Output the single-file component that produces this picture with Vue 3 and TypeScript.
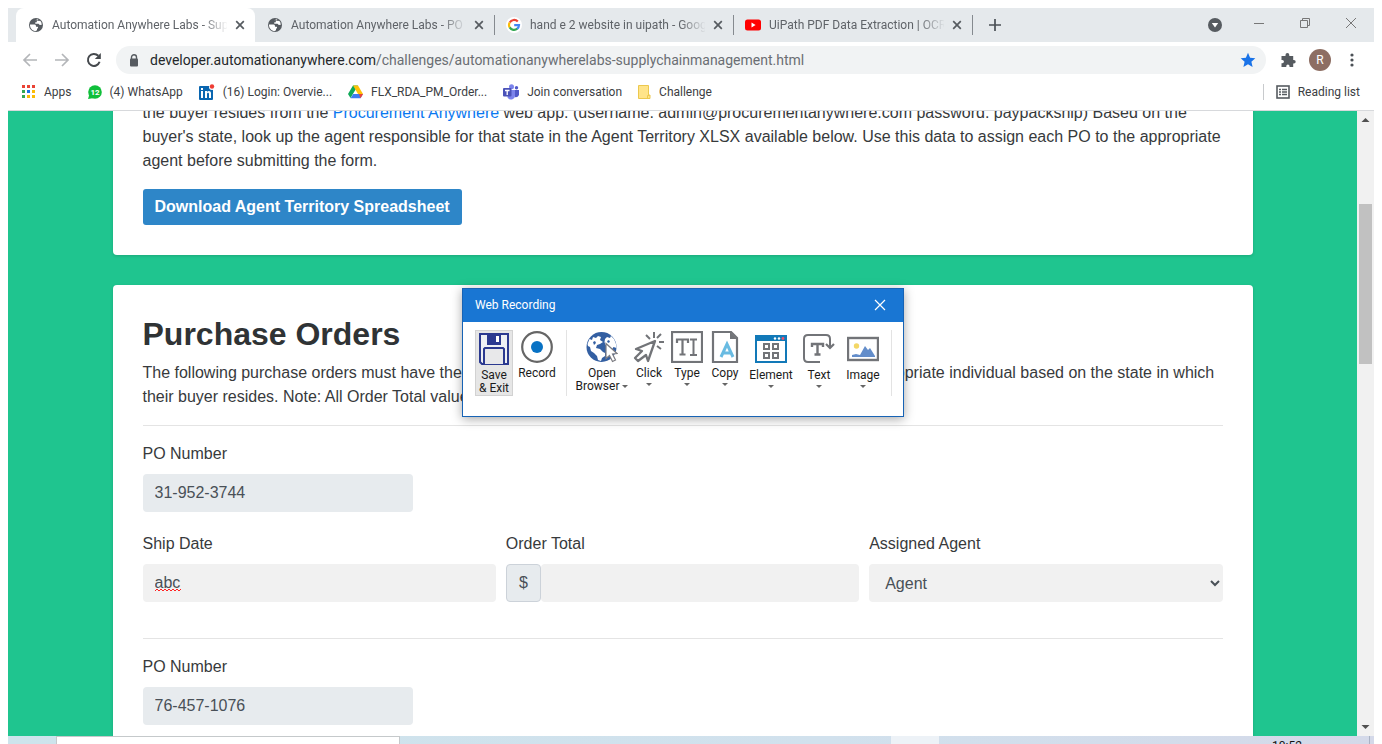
<script setup lang="ts">
import { ref } from 'vue'

type TabIcon = 'globe' | 'google' | 'youtube'
interface Tab { title: string; icon: TabIcon; active?: boolean; divided?: boolean }
interface Bookmark { label: string; icon: string }

const tabs: Tab[] = [
  { title: 'Automation Anywhere Labs - Supply Chain', icon: 'globe', active: true },
  { title: 'Automation Anywhere Labs - PO Tracking', icon: 'globe' },
  { title: 'hand e 2 website in uipath - Google Search', icon: 'google', divided: true },
  { title: 'UiPath PDF Data Extraction | OCR Data', icon: 'youtube', divided: true },
]
const bookmarks: Bookmark[] = [
  { label: 'Apps', icon: 'apps' },
  { label: '(4) WhatsApp', icon: 'whatsapp' },
  { label: '(16) Login: Overvie...', icon: 'linkedin' },
  { label: 'FLX_RDA_PM_Order...', icon: 'drive' },
  { label: 'Join conversation', icon: 'teams' },
  { label: 'Challenge', icon: 'note' },
]
const appColors = ['#ea4335', '#ea4335', '#ea4335', '#34a853', '#1a73e8', '#fbbc05', '#34a853', '#fbbc05', '#fbbc05']

const firstPo = ref('31-952-3744')
const secondPo = ref('76-457-1076')
const shipDate = ref('abc')
const orderTotal = ref('')
const agent = ref('Agent')
</script>

<template>
  <div class="screen">
    <div class="browser">
      <header class="tabstrip">
        <div class="strip-edge"></div>
        <div v-for="(tab, i) in tabs" :key="i" class="tab" :class="{ active: tab.active, divided: tab.divided }">
          <svg v-if="tab.icon === 'globe'" class="favicon" viewBox="0 0 16 16">
            <circle cx="8" cy="8" r="7" fill="#565b60" />
            <path d="M2 7.500h4.500c1.500 0 1.500 1.500 1.500 2.200h1.700c.8.900.2 1.700-.7 2v1.600l-1.800.9C4 13.600 1.800 10.800 2 7.500zM7 3.300l3-1c.6.800-.2 1.500-1.200 1.500v1.500H7.300v1.500h3.200l1.300 1.200 2-.2-.5-2.500-1.300-1.800c-1 1-2.200.4-2.200-.4" fill="#fff" />
          </svg>
          <svg v-else-if="tab.icon === 'google'" class="favicon" viewBox="0 0 16 16">
            <circle cx="8" cy="8" r="8" fill="#fff" />
            <g fill="none" stroke-width="2.200">
              <path d="M11.800 4.600A5 5 0 0 0 3.700 5.600" stroke="#ea4335" />
              <path d="M3.700 5.500a5 5 0 0 0 0 5" stroke="#fbbc05" />
              <path d="M3.700 10.400a5 5 0 0 0 7.600 1.300" stroke="#34a853" />
              <path d="M11.200 11.800A5 5 0 0 0 13 8.200H8.200" stroke="#4285f4" />
            </g>
          </svg>
          <svg v-else class="favicon" viewBox="0 0 16 16">
            <rect x="0" y="2.500" width="16" height="11" rx="2.500" fill="#f00" />
            <path d="M6.500 5.600v4.800L10.600 8z" fill="#fff" />
          </svg>
          <span class="tab-title">{{ tab.title }}</span>
          <button class="icon-btn tab-close" aria-label="Close tab">
            <svg width="10" height="10" viewBox="0 0 10 10"><path d="M1.200 1.200l7.600 7.600M8.800 1.200L1.200 8.800" stroke="#565b60" stroke-width="1.700" /></svg>
          </button>
        </div>
        <button class="icon-btn new-tab" aria-label="New tab">
          <svg width="12" height="12" viewBox="0 0 12 12"><path d="M6 0v12M0 6h12" stroke="#4b5056" stroke-width="1.700" /></svg>
        </button>
        <div class="window-controls">
          <button class="icon-btn" aria-label="Search tabs">
            <svg width="14" height="14" viewBox="0 0 14 14"><circle cx="7" cy="7" r="7" fill="#565b60" /><path d="M3.800 5h6.400L7 9.500z" fill="#fff" /></svg>
          </button>
          <button class="icon-btn" aria-label="Minimize">
            <svg width="12" height="12" viewBox="0 0 12 12"><path d="M1 6.500h10" stroke="#777" /></svg>
          </button>
          <button class="icon-btn" aria-label="Restore">
            <svg width="12" height="12" viewBox="0 0 12 12"><path d="M1.500 3.500h7v7h-7zM3.500 3.500v-2h7v7h-2" fill="none" stroke="#777" /></svg>
          </button>
          <button class="icon-btn" aria-label="Close">
            <svg width="12" height="12" viewBox="0 0 12 12"><path d="M1 1l10 10M11 1L1 11" stroke="#777" /></svg>
          </button>
        </div>
      </header>

      <nav class="toolbar">
        <button class="icon-btn nav-btn" aria-label="Back">
          <svg width="16" height="16" viewBox="0 0 16 16"><path d="M15 8H2M8 2L2 8l6 6" fill="none" stroke="#b4b6b9" stroke-width="1.700" /></svg>
        </button>
        <button class="icon-btn nav-btn" aria-label="Forward">
          <svg width="16" height="16" viewBox="0 0 16 16"><path d="M1 8h13M8 2l6 6-6 6" fill="none" stroke="#b4b6b9" stroke-width="1.700" /></svg>
        </button>
        <button class="icon-btn nav-btn" aria-label="Reload">
          <svg width="16" height="16" viewBox="0 0 16 16"><path d="M13.600 9.800A6 6 0 1 1 12.300 3.800" fill="none" stroke="#45494d" stroke-width="2" /><path d="M14.800 1v6h-6z" fill="#45494d" /></svg>
        </button>
        <div class="omnibox">
          <svg width="10" height="13" viewBox="0 0 10 13"><rect x="1" y="4.500" width="8" height="8" rx="1" fill="#565b60" /><path d="M2.500 5.500V3.300a2.500 2.500 0 0 1 5 0v2.200" fill="none" stroke="#565b60" stroke-width="1.400" /></svg>
          <span class="url"><b>developer.automationanywhere.com</b>/challenges/automationanywherelabs-supplychainmanagement.html</span>
          <button class="icon-btn" aria-label="Bookmark this page">
            <svg width="16" height="16" viewBox="0 0 16 16"><path d="M8 .8l2.100 4.900 5.200.5-3.900 3.500 1.200 5.200L8 12.200l-4.600 2.700 1.200-5.200L.7 6.200l5.200-.5z" fill="#1a73e8" /></svg>
          </button>
        </div>
        <div class="actions">
          <button class="icon-btn" aria-label="Extensions">
            <svg width="16" height="16" viewBox="0 0 16 16"><path d="M1.500 4h4V3a1.900 1.900 0 0 1 3.800 0v1h3.900v4h.7a1.800 1.800 0 0 1 0 3.600h-.7V15H9.500v-.9a1.600 1.600 0 0 0-3.200 0v.9H1.500v-3.800h.8a1.600 1.600 0 0 0 0-3.300h-.8z" fill="#565b60" /></svg>
          </button>
          <button class="avatar">R</button>
          <button class="icon-btn" aria-label="Menu">
            <svg width="4" height="14" viewBox="0 0 4 14"><g fill="#4b5056"><circle cx="2" cy="2" r="1.600" /><circle cx="2" cy="7" r="1.600" /><circle cx="2" cy="12" r="1.600" /></g></svg>
          </button>
        </div>
      </nav>

      <nav class="bookmarks">
        <a v-for="b in bookmarks" :key="b.label" href="#" class="bookmark">
          <svg v-if="b.icon === 'apps'" width="14" height="14" viewBox="0 0 14 14">
            <rect v-for="(c, i) in appColors" :key="i" :x="(i % 3) * 5" :y="Math.floor(i / 3) * 5" width="3" height="3" :fill="c" />
          </svg>
          <svg v-else-if="b.icon === 'whatsapp'" width="14" height="14" viewBox="0 0 14 14">
            <circle cx="7" cy="7" r="6.800" fill="#10bf3a" /><path d="M0 14l1.500-5L6 13z" fill="#10bf3a" />
            <text x="7" y="10" text-anchor="middle" font-size="8" font-weight="700" fill="#fff">12</text>
          </svg>
          <svg v-else-if="b.icon === 'linkedin'" width="16" height="16" viewBox="0 0 16 16">
            <rect x="0" y="2" width="14" height="14" rx="1" fill="#0a66b0" />
            <path d="M2 7h2v7H2zM2 4h2v2H2zM6 7h2v1c1-1.600 4-1.500 4 1.200V14h-2v-4c0-1.800-2-1.800-2 0v4H6z" fill="#fff" />
            <circle cx="13" cy="3" r="3" fill="#fff" /><circle cx="13" cy="2.500" r="2.200" fill="#ee3c33" />
          </svg>
          <svg v-else-if="b.icon === 'drive'" width="15" height="14" viewBox="0 0 15 14">
            <path d="M5 0.500h5L5.200 8.500 2.500 13 0 9z" fill="#0fa958" /><path d="M5 .5h5L15 9h-5z" fill="#ffc107" /><path d="M5.200 9H15l-2.500 4.300h-10z" fill="#3c7cf0" /><path d="M11 9h4l-2.500 4.300z" fill="#ea4335" />
          </svg>
          <svg v-else-if="b.icon === 'teams'" width="16" height="16" viewBox="0 0 16 16">
            <circle cx="8.500" cy="2.800" r="2.500" fill="#7b83eb" /><circle cx="13.500" cy="3.800" r="1.700" fill="#5059c9" />
            <path d="M11 6h5v4.500a3 3 0 0 1-4 2.500z" fill="#5059c9" /><path d="M5 6h7v5.500a4 4 0 0 1-7.500 2z" fill="#7b83eb" />
            <rect x="0" y="4" width="8.500" height="8.500" rx="1" fill="#4a52b8" /><path d="M2 6.500h4.500M4.200 6.500V11" stroke="#fff" stroke-width="1.300" />
          </svg>
          <svg v-else width="13" height="14" viewBox="0 0 13 14">
            <path d="M.5.5h10v9.500h1.500v3.500H.5z" fill="#ffe489" stroke="#ecc84e" /><path d="M9.500 13.500v-3h2" fill="none" stroke="#ecc84e" />
          </svg>
          <span>{{ b.label }}</span>
        </a>
        <button class="reading">
          <svg width="14" height="14" viewBox="0 0 14 14"><rect x="1" y="1" width="12" height="12" fill="none" stroke="#565b60" stroke-width="1.600" /><path d="M3 4.500h2M6 4.500h5M3 7h2M6 7h5M3 9.500h2M6 9.500h5" stroke="#565b60" stroke-width="1.300" /></svg>
          <span>Reading list</span>
        </button>
      </nav>

      <div class="viewport">
        <main class="page">
          <section class="card intro">
            <p>
              the buyer resides from the <a href="#">Procurement Anywhere</a> web app. (username: admin@procurementanywhere.com password: paypackship) Based on the buyer's state, look up the agent responsible for that state in the Agent Territory XLSX available below. Use this data to assign each PO to the appropriate agent before submitting the form.
            </p>
            <button class="download">Download Agent Territory Spreadsheet</button>
          </section>

          <section class="card">
            <h2>Purchase Orders</h2>
            <p>
              The following purchase orders must have their tracking information completed and be assigned to the appropriate individual based on the state in which their buyer resides. Note: All Order Total values are in USD.
            </p>
            <hr />
            <div class="field po">
              <label for="po1">PO Number</label>
              <input id="po1" v-model="firstPo" type="text" readonly />
            </div>
            <div class="form-row">
              <div class="field">
                <label for="ship">Ship Date</label>
                <div class="spelled">
                  <input id="ship" v-model="shipDate" type="text" spellcheck="false" />
                  <svg class="squiggle" width="26" height="4" viewBox="0 0 26 4"><path d="M0 3l2-2 2 2 2-2 2 2 2-2 2 2 2-2 2 2 2-2 2 2 2-2 2 2 2-2" fill="none" stroke="#f22" /></svg>
                </div>
              </div>
              <div class="field">
                <label for="total">Order Total</label>
                <div class="input-group">
                  <span class="prefix">$</span>
                  <input id="total" v-model="orderTotal" type="text" />
                </div>
              </div>
              <div class="field">
                <label for="agent">Assigned Agent</label>
                <select id="agent" v-model="agent"><option>Agent</option></select>
              </div>
            </div>
            <hr class="spaced" />
            <div class="field po">
              <label for="po2">PO Number</label>
              <input id="po2" v-model="secondPo" type="text" readonly />
            </div>
          </section>
        </main>
        <div class="scrollbar">
          <svg width="17" height="17" viewBox="0 0 17 17"><path d="M4.500 11L8.500 7l4 4z" fill="#505050" /></svg>
          <div class="track"><div class="thumb"></div></div>
          <svg width="17" height="17" viewBox="0 0 17 17"><path d="M4.500 6L8.500 10l4-4z" fill="#505050" /></svg>
        </div>
      </div>

      <footer class="taskbar">
        <div class="task-search"></div>
        <div class="task-active"></div>
        <div class="clock">10:52</div>
      </footer>
    </div>

    <div class="dialog" role="dialog" aria-label="Web Recording">
      <div class="dialog-title">
        <span>Web Recording</span>
        <button class="icon-btn" aria-label="Close recorder">
          <svg width="12" height="12" viewBox="0 0 12 12"><path d="M1 1l10 10M11 1L1 11" stroke="#fff" stroke-width="1.200" /></svg>
        </button>
      </div>
      <div class="ribbon">
        <button class="tool save low">
          <svg width="32" height="32" viewBox="0 0 32 32">
            <path d="M2 1h28v30H4l-2-2z" fill="#eef0f4" stroke="#2b3990" stroke-width="2" />
            <path d="M9 1h14v11H9z" fill="#2b3990" /><path d="M18 3h3v6h-3z" fill="#fff" />
            <path d="M6 31V16l1-1h18l1 1v15" fill="#e8e8ea" stroke="#2b3990" stroke-width="2" />
          </svg>
          <span>Save<br />&amp; Exit</span>
        </button>
        <button class="tool record">
          <svg width="32" height="32" viewBox="0 0 32 32"><circle cx="16" cy="16" r="14.800" fill="#fff" stroke="#666" stroke-width="2.200" /><circle cx="16" cy="16" r="6" fill="#0872c4" /></svg>
          <span>Record</span>
        </button>
        <div class="rule"></div>
        <button class="tool open">
          <svg width="32" height="32" viewBox="0 0 32 32">
            <circle cx="15.500" cy="16" r="15" fill="#335fa2" />
            <path d="M1.500 13l2-5 2.500 1 1-3 3 1 2-2 3 1-1 3 3 2-3 2-3 1-1 3 4 1 3 3 2 1v3l-3 2-1 3-3-1-1-4-3-3-3-2-1-4-2-1z" fill="#fff" />
            <path d="M19 8l2-2 3 1 1-2 3 3 2 5 .5 4-3-1-2 3-2-4-4-1-1-3z" fill="#fff" />
            <path d="M7 11l2-1 1 2-2 2zM22 9l2 1-1 2-2-1z" fill="#335fa2" />
            <path d="M20 12.500l11 10-4.500.5 3 6-3 1.500-3-6-3.500 3z" fill="#fff" stroke="#7c7c82" stroke-width="1.200" />
          </svg>
          <span>Open<br />Browser <i class="caret side"></i></span>
        </button>
        <button class="tool click">
          <svg width="32" height="32" viewBox="0 0 32 32">
            <path d="M22 10L3 18l6 2-7 7 3 3 8-6 2 6z" fill="#fff" stroke="#727478" stroke-width="2.300" stroke-linejoin="round" />
            <path d="M13 4l4 4M21 1v6M28 3l-4 4M26 11h5M24 15l4 3" stroke="#727478" stroke-width="2" />
          </svg>
          <span>Click</span><i class="caret"></i>
        </button>
        <button class="tool type">
          <svg width="32" height="32" viewBox="0 0 32 32">
            <rect x="1" y="1" width="30" height="30" fill="#fff" stroke="#727478" stroke-width="2.200" />
            <path d="M6 12V8.500h11V12M11.500 8v15M8.500 23.500h6" fill="none" stroke="#727478" stroke-width="2.200" />
            <path d="M19 8.500h7M22.500 8v16M19 24h7" stroke="#727478" stroke-width="2" />
          </svg>
          <span>Type</span><i class="caret"></i>
        </button>
        <button class="tool copy">
          <svg width="32" height="32" viewBox="0 0 32 32">
            <path d="M4 1h18l6 6v24H4z" fill="#fff" stroke="#727478" stroke-width="2.200" /><path d="M21 1v7h7z" fill="#727478" />
            <path d="M12 26l6-13 6 13M14 22h8" fill="none" stroke="#69bbe2" stroke-width="3" />
          </svg>
          <span>Copy</span><i class="caret"></i>
        </button>
        <button class="tool element low">
          <svg width="32" height="32" viewBox="0 0 32 32">
            <path d="M1 5h30v26H1z" fill="#fff" stroke="#1279b8" stroke-width="2" /><path d="M0 4h32v6H0z" fill="#1279b8" />
            <circle cx="20" cy="7.500" r="1.200" fill="#fff" /><circle cx="24" cy="7.500" r="1.200" fill="#fff" /><circle cx="28" cy="7.500" r="1.400" fill="#f0506a" />
            <path d="M9 13h5v5H9zM18 13h5v5h-5zM9 22h5v5H9zM18 22h5v5h-5z" fill="none" stroke="#727478" stroke-width="2" />
          </svg>
          <span>Element</span><i class="caret"></i>
        </button>
        <button class="tool text low">
          <svg width="32" height="32" viewBox="0 0 32 32">
            <path d="M17 31H5q-4 0-4-4V8q0-4 4-4h18q4 0 4 4v9" fill="none" stroke="#727478" stroke-width="2" />
            <path d="M23 13l4 4 4-4" fill="none" stroke="#727478" stroke-width="2.200" />
            <path d="M9 16v-3h11v3M14.500 13v10M11.500 23.500h6" fill="none" stroke="#727478" stroke-width="2.400" />
          </svg>
          <span>Text</span><i class="caret"></i>
        </button>
        <button class="tool image low">
          <svg width="32" height="32" viewBox="0 0 32 32">
            <rect x="1" y="7" width="30" height="22" fill="#fff" stroke="#727478" stroke-width="2.400" />
            <circle cx="9.500" cy="15" r="2.700" fill="#f3d766" /><path d="M5 26v-2l4-1 4 1 5-9 3 4 2-2 5 8v1z" fill="#638dca" />
          </svg>
          <span>Image</span><i class="caret"></i>
        </button>
        <div class="rule end"></div>
      </div>
    </div>
  </div>
</template>

<style>
body { background: #fff; }
</style>

<style scoped>
* { box-sizing: border-box; }
button, input, select { font: inherit; border: 0; margin: 0; color: inherit; }
button { padding: 0; background: none; }
svg { display: block; flex: none; }
.screen { position: relative; height: 100vh; overflow: hidden; font-family: Roboto, "Noto Sans", sans-serif; font-size: 12px; color: #3c4043; }
.browser { height: 100%; display: flex; flex-direction: column; padding: 8px 8px 0; }
.icon-btn { display: grid; place-items: center; flex: none; }

.tabstrip { display: flex; height: 34px; flex: none; background: #e5e9ec; }
.strip-edge { width: 8px; }
.tab { display: flex; align-items: center; width: 239px; padding: 0 7px 0 12px; color: #5f6368; position: relative; }
.tab.active { background: #fff; border-radius: 8px 8px 0 0; }
.tab.divided::before, .tab:nth-child(5)::after { content: ""; position: absolute; left: 0; top: 7px; width: 1px; height: 20px; background: #858a8f; }
.tab:nth-child(5)::after { left: 100%; }
.favicon { width: 16px; height: 16px; }
.tab-title { flex: 1; min-width: 0; margin-left: 8px; white-space: nowrap; overflow: hidden; -webkit-mask-image: linear-gradient(to right, #000 150px, transparent 176px); mask-image: linear-gradient(to right, #000 150px, transparent 176px); }
.tab-close { width: 16px; height: 16px; margin-left: 5px; }
.new-tab { width: 46px; }
.window-controls { margin-left: auto; display: flex; align-items: center; gap: 31px; padding-right: 16px; }
.window-controls .icon-btn { width: 15px; padding-bottom: 4px; }
.window-controls .icon-btn:first-child { width: 12px; padding: 0; }

.toolbar { display: flex; align-items: center; flex: none; height: 36px; padding: 0 14px; }
.nav-btn { width: 16px; margin-right: 16px; }
.nav-btn:nth-child(3) { margin-right: 14px; }
.omnibox { flex: 1; display: flex; align-items: center; height: 28px; padding: 0 10px 0 13px; border-radius: 14px; background: #f1f3f4; font-size: 14px; color: #6a6e73; }
.url { flex: 1; margin-left: 11px; white-space: nowrap; }
.url b { font-weight: 400; color: #24272a; }
.actions { display: flex; align-items: center; gap: 13px; margin-left: 14px; }
.avatar { width: 22px; height: 22px; border-radius: 50%; background: #8d6e63; color: #fff; font-size: 12px; text-align: center; }
.actions .icon-btn:last-child { width: 16px; }

.bookmarks { display: flex; align-items: center; flex: none; height: 33px; padding: 0 14px 4px 14px; border-bottom: 1px solid #d7d9dc; gap: 16px; }
.bookmark { display: flex; align-items: center; gap: 8px; color: #3c4043; text-decoration: none; white-space: nowrap; }
.reading { margin-left: auto; display: flex; align-items: center; gap: 8px; height: 16px; padding-left: 12px; border-left: 1px solid #c8cacd; white-space: nowrap; }

.viewport { flex: 1; min-height: 0; display: flex; overflow: hidden; background: #1fc58f; font-family: "Liberation Sans", Arial, sans-serif; font-size: 16px; line-height: 24px; color: #373a3c; }
.page { flex: 1; min-width: 0; display: flex; flex-direction: column; align-items: center; gap: 30px; overflow: hidden; }
.card { flex: none; width: 100%; max-width: 1140px; padding: 30px; border-radius: 4px; background: #fff; box-shadow: 0 1px 3px rgba(0, 0, 0, .15); }
.intro { margin-top: -40px; }
.card p { margin: 0 0 16px; }
.card a { color: #0a78f0; text-decoration: none; }
.download { display: block; height: 36px; padding: 0 12px; border-radius: 3px; background: #2e86c8; color: #fff; font-weight: 700; }
h2 { margin: 0 0 8px; font-size: 32px; line-height: 38px; color: #2f3335; }
hr { margin: 0 0 16px; border: 0; border-top: 1px solid #e4e4e4; }
hr.spaced { margin-top: 36px; }
.field { display: flex; flex-direction: column; gap: 8px; min-width: 0; }
.field.po { width: 25%; margin-bottom: 20px; }
.field input, .field select { width: 100%; height: 38px; padding: 0 12px; border-radius: 4px; background: #f1f1f1; color: #495057; outline: 0; }
.field input[readonly] { background: #e7ebee; }
.form-row { display: grid; grid-template-columns: repeat(3, 1fr); gap: 10px; }
.input-group { display: flex; }
.input-group input { flex: 1; min-width: 0; }
.prefix { display: grid; place-items: center; width: 35px; flex: none; border: 1px solid #ccd2d9; border-radius: 4px; background: #e7ebee; color: #495057; }
.spelled { position: relative; }
.squiggle { position: absolute; left: 12px; top: 24px; }
.scrollbar { display: flex; flex-direction: column; width: 17px; flex: none; background: #f1f1f1; }
.track { flex: 1; padding: 76px 2px 0; }
.thumb { height: 31%; min-height: 30px; background: #c1c1c1; }

.taskbar { flex: none; display: flex; height: 8px; overflow: hidden; background: linear-gradient(to right, #cde4ec, #d1e1ed 60%, #d4d9e9); }
.task-search { width: 26%; max-width: 344px; margin-left: 48px; border: 1px solid #c5c9cb; border-bottom: 0; background: #fff; }
.task-active { width: 48px; margin-left: auto; background: #edf2f7; }
.clock { width: 431px; padding: 4px 0 0 333px; border-right: 1px solid #a9b2c4; margin-right: 4px; line-height: 12px; color: #111; }

.dialog { position: absolute; left: calc(50% - 229px); top: 288px; width: 442px; height: 129px; border: 1px solid #1763b5; background: #fff; box-shadow: 0 2px 10px rgba(0, 0, 0, .35); color: #1b1b1b; line-height: 14px; }
.dialog-title { display: flex; align-items: center; justify-content: space-between; height: 33px; padding: 0 17px 2px 12px; background: #1976d3; color: #fff; }
.ribbon { display: flex; padding: 8px 0 0 12px; }
.tool { position: relative; display: flex; flex-direction: column; align-items: center; flex: none; height: 66px; padding-top: 1px; white-space: nowrap; line-height: 13px; }
.tool span { margin-top: 4px; }
.tool.low span { margin-top: 6px; }
.save { width: 38px; padding-top: 2px; border: 1px solid #d2d2d2; background: #e6e6e6; }
.save.low span { margin-top: 4px; }
.record { width: 48px; }
.open { width: 54px; }
.click, .copy { width: 40px; }
.type { width: 36px; }
.element { width: 52px; }
.text, .image { width: 44px; }
.rule { width: 1px; height: 66px; margin: 0 8px 0 5px; background: #e3e3e3; }
.rule.end { margin: 0 0 0 6px; }
.caret { margin-top: 3px; border: 3px solid transparent; border-top-color: #666; border-bottom: 0; }
.caret.side { display: inline-block; margin: 0; vertical-align: middle; }
</style>
